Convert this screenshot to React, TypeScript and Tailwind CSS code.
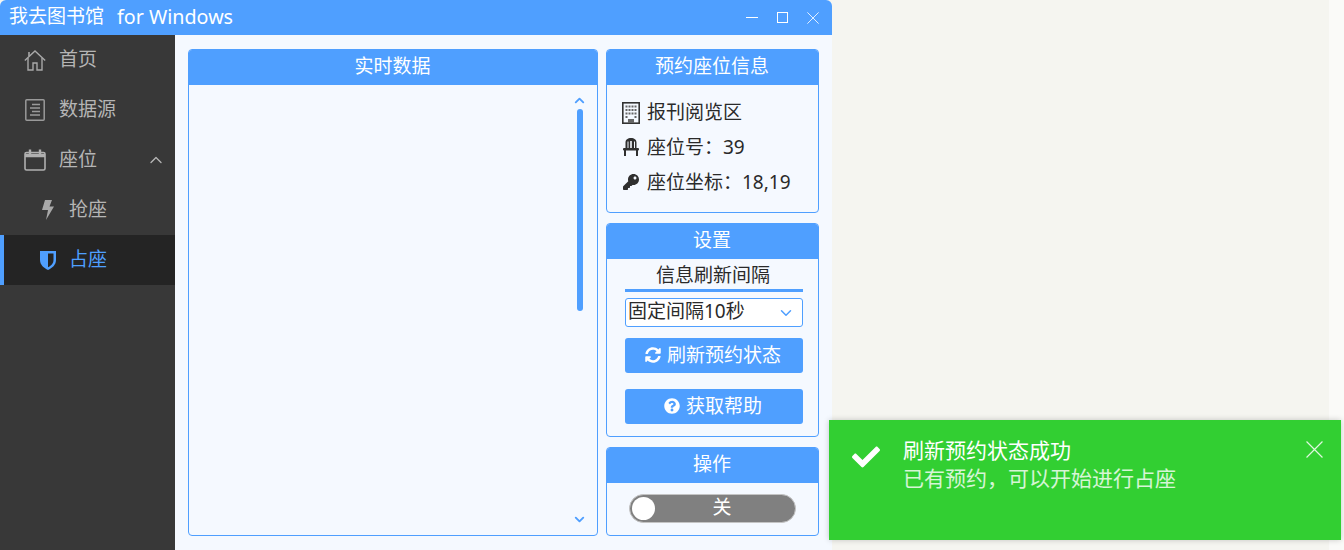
import React from 'react';
import { FaCheck, FaKey, FaQuestionCircle, FaSyncAlt } from 'react-icons/fa';
import { ChevronDown, ChevronUp } from 'lucide-react';

const FONT = "font-['Noto_Sans','Noto_Sans_CJK_SC',sans-serif]";

const HomeIcon = () => (
    <svg width="22" height="21" viewBox="0 0 22 21" fill="none" stroke="#a8a8a8" strokeWidth="1.4">
        <path d="M0.8 10.500 11 1l10.200 9.500" />
        <path d="M4 8v12h5v-7h4v7h5V8" />
        <path d="M5 2v4" strokeWidth="1.6" />
    </svg>
);

const DocIcon = () => (
    <svg width="20" height="22" viewBox="0 0 20 22" fill="none" stroke="#9a9a9a" strokeWidth="1.5">
        <rect x="0.800" y="0.800" width="18.400" height="20.400" rx="1" />
        <path d="M7 5.500h8M5 9h10M7 12.500h8M5 16h10" />
    </svg>
);

const CalendarIcon = () => (
    <svg width="22" height="22" viewBox="0 0 22 22" fill="none" stroke="#b0b0b0" strokeWidth="1.600">
        <rect x="1" y="3.500" width="20" height="17.500" rx="1.500" />
        <path d="M1 6.500h20" strokeWidth="3.400" />
        <path d="M6 0.500v5M16 0.500v5" strokeWidth="2.400" />
    </svg>
);

const BoltIcon = () => (
    <svg width="12" height="20" viewBox="0 0 12 20" fill="#a8a8a8">
        <path d="M3 0h7L7.500 6.500H12L4 20l2-10H0z" />
    </svg>
);

const ShieldIcon = () => (
    <svg width="16" height="19" viewBox="0 0 16 19">
        <path d="M0 0h16v9c0 5-4 8-8 10-4-2-8-5-8-10z" fill="#4f9fff" />
        <path d="M8 2.500h5.500V9c0 3.500-2.700 5.800-5.500 7.300z" fill="#242424" />
    </svg>
);

const BuildingIcon = () => (
    <svg width="18" height="22" viewBox="0 0 18 22">
        <rect x="0.800" y="0.800" width="16.400" height="20.400" fill="#f5f9ff" stroke="#333" strokeWidth="1.600" />
        <path d="M3.500 3.500h2v2h-2zM6.500 3.500h2v2h-2zM9.500 3.500h2v2h-2zM12.500 3.500h2v2h-2zM3.500 7h2v2h-2zM6.500 7h2v2h-2zM9.500 7h2v2h-2zM12.500 7h2v2h-2zM3.500 10.500h2v2h-2zM6.500 10.500h2v2h-2zM9.500 10.500h2v2h-2zM12.500 10.500h2v2h-2zM3.500 14h2v2h-2zM12.500 14h2v2h-2zM6 17h6v4H6z" fill="#666" />
    </svg>
);

const ChairIcon = () => (
    <svg width="16" height="18" viewBox="0 0 16 18" fill="#2f2f2f" className="-ml-px mb-[2px]">
        <path d="M2.500 4.500C2.500 1.500 4.800 0 8 0s5.500 1.500 5.500 4.500V10h-1.500V3.500h-1V10H8.800V3H7.200v7H5.500V3.500h-1V10h-2z" />
        <rect x="0" y="10" width="16" height="2.500" rx="1" />
        <rect x="1" y="12" width="2" height="6" />
        <rect x="13" y="12" width="2" height="6" />
    </svg>
);

const CloseIcon = ({ size, color }: { size: number; color: string }) => (
    <svg width={size} height={size} viewBox="0 0 16 16" stroke={color} strokeWidth="1.100" fill="none">
        <path d="M0.500 0.500l15 15M15.500 0.500l-15 15" />
    </svg>
);

const Panel = ({ title, className, children }: { title: string; className?: string; children?: React.ReactNode }) => (
    <section className={`flex flex-col rounded-[4px] border border-[#4f9fff] ${className ?? ''}`}>
        <h2 className="flex h-[35px] shrink-0 items-center justify-center rounded-t-[3px] bg-[#4f9fff] pb-[2px] pr-[1px] text-[19px] font-normal text-white">{title}</h2>
        {children}
    </section>
);

const NavItem = ({ icon, label, active, sub, right }: { icon: React.ReactNode; label: string; active?: boolean; sub?: boolean; right?: React.ReactNode }) => (
    <div className={`flex h-[50px] items-center ${active ? 'border-l-4 border-[#4f9fff] bg-[#242424] text-[#4f9fff]' : 'text-[#b5b5b5]'} ${sub ? (active ? 'pl-[36px]' : 'pl-[40px]') : 'pl-[24px]'}`}>
        <span className={`flex h-6 items-center justify-center ${sub ? 'mr-[13px] w-[16px]' : 'mr-[13px] w-[22px]'}`}>{icon}</span>
        <span className="pb-[2px] text-[19px]">{label}</span>
        {right}
    </div>
);

const InfoRow = ({ icon, children }: { icon: React.ReactNode; children: React.ReactNode }) => (
    <div className="flex h-[35px] items-center text-[19px] text-[#2a2a2a]">
        <span className="mr-[7px] flex w-[18px] justify-center">{icon}</span>
        {children}
    </div>
);

export default function App() {
    return (
        <div className={`relative h-[550px] w-[1344px] overflow-hidden bg-[#f5f5f0] ${FONT}`}>
            <div className="flex">
                <div className="flex h-[550px] w-[832px] flex-col overflow-hidden rounded-t-[6px] bg-[#f5f9ff]">
                    <header className="flex h-[35px] shrink-0 items-center justify-between bg-[#4f9fff] pl-[9px] pr-[13px] text-white">
                        <div className="flex items-center pb-[2px]">
                            <span className="text-[19px]">我去图书馆</span>
                            <span className="ml-[13px] text-[19.7px]">for Windows</span>
                        </div>
                        <div className="flex items-center gap-[19px]">
                            <span className="h-px w-[12px] bg-white" />
                            <span className="h-[11px] w-[11px] border border-white" />
                            <CloseIcon size={12} color="white" />
                        </div>
                    </header>
                    <div className="flex flex-1">
                        <nav className="w-[175px] shrink-0 bg-[#383838]">
                            <NavItem icon={<HomeIcon />} label="首页" />
                            <NavItem icon={<DocIcon />} label="数据源" />
                            <NavItem icon={<CalendarIcon />} label="座位" right={<ChevronUp size={20} strokeWidth={1.6} className="ml-auto mr-[9px]" />} />
                            <NavItem sub icon={<BoltIcon />} label="抢座" />
                            <NavItem sub active icon={<ShieldIcon />} label="占座" />
                        </nav>
                        <main className="flex flex-1 gap-[8px] px-[13px] py-[14px]">
                            <Panel title="实时数据" className="w-[410px]">
                                <div className="relative flex-1">
                                    <ChevronUp size={15} strokeWidth={3} color="#4f9fff" className="absolute right-[10px] top-[8px]" />
                                    <div className="absolute right-[14px] top-[24px] h-[202px] w-[6px] rounded-full bg-[#4f9fff]" />
                                    <ChevronDown size={15} strokeWidth={3} color="#4f9fff" className="absolute right-[10px] bottom-[8px]" />
                                </div>
                            </Panel>
                            <div className="flex w-[213px] flex-col gap-[10px]">
                                <Panel title="预约座位信息" className="h-[164px]">
                                    <div className="px-[15px] pt-[10px]">
                                        <InfoRow icon={<BuildingIcon />}>报刊阅览区</InfoRow>
                                        <InfoRow icon={<ChairIcon />}>座位号：39</InfoRow>
                                        <InfoRow icon={<FaKey size={16} color="#2f2f2f" className="-ml-px mb-[2px]" />}>座位坐标：18,19</InfoRow>
                                    </div>
                                </Panel>
                                <Panel title="设置" className="h-[214px]">
                                    <div className="flex flex-col pl-[18px] pr-[15px]">
                                        <div className="h-[33px] border-b-[3px] border-[#4f9fff] pr-[2px] pt-[3px] text-center text-[19px] leading-[26px] text-[#2a2a2a]">信息刷新间隔</div>
                                        <div className="mt-[6px] flex h-[29px] items-center justify-between rounded-[3px] border border-[#4f9fff] bg-white pl-[2px] pr-[7px] text-[19px] text-[#2a2a2a]">
                                            <span className="pb-[2px]">固定间隔10秒</span>
                                            <ChevronDown size={18} color="#4f9fff" />
                                        </div>
                                        <button className="mt-[11px] flex h-[35px] items-center justify-center gap-[6px] rounded-[3px] bg-[#4f9fff] pb-[1px] pr-[2px] text-[19px] text-white">
                                            <FaSyncAlt size={16} />
                                            刷新预约状态
                                        </button>
                                        <button className="mt-[16px] flex h-[35px] items-center justify-center gap-[6px] rounded-[3px] bg-[#4f9fff] pb-[1px] pr-[2px] text-[19px] text-white">
                                            <FaQuestionCircle size={16} />
                                            获取帮助
                                        </button>
                                    </div>
                                </Panel>
                                <Panel title="操作" className="flex-1">
                                    <div className="flex flex-1 items-center pb-[2px] pl-[22px]">
                                        <div className="flex h-[29px] w-[167px] items-center rounded-full border border-[#c4c4c4] bg-[#808080] pl-[2px]">
                                            <span className="h-[23px] w-[23px] rounded-full bg-white" />
                                            <span className="flex-1 pb-[2px] pr-[6px] text-center text-[19px] text-white">关</span>
                                        </div>
                                    </div>
                                </Panel>
                            </div>
                        </main>
                    </div>
                </div>
                <div className="ml-[497px] h-[550px] w-[15px] bg-[#fafaf8]" />
            </div>
            {/* toast sits over the window edge */}
            <div className="absolute left-[829px] top-[420px] h-[120px] w-[512px] bg-[#32cf32] pl-[23px] shadow-[0_0_6px_rgba(0,0,0,0.2)]">
                <div className="flex items-start">
                    <FaCheck size={28} color="white" className="mt-[23px]" />
                    <div className="ml-[23px] mt-[16px] text-[21px] leading-[28px]">
                        <p className="text-white">刷新预约状态成功</p>
                        <p className="text-white/80">已有预约，可以开始进行占座</p>
                    </div>
                </div>
                <span className="absolute right-[18px] top-[21px] opacity-85">
                    <CloseIcon size={17} color="white" />
                </span>
            </div>
        </div>
    );
}
